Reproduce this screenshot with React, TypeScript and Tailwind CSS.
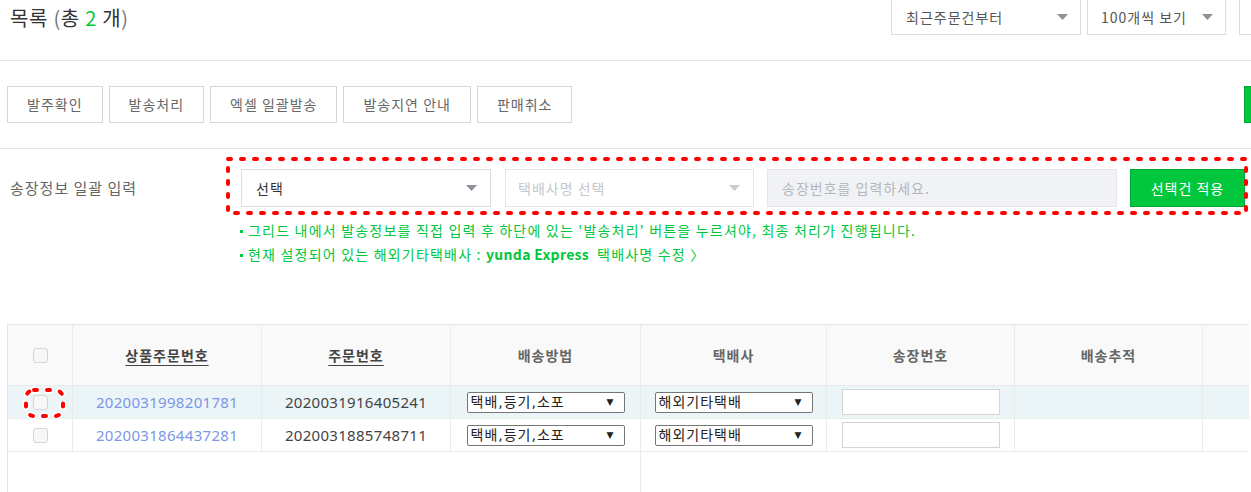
import React from 'react'

const ACTION_BUTTONS = ['발주확인', '발송처리', '엑셀 일괄발송', '발송지연 안내', '판매취소']

const ROWS = [
  { productNo: '2020031998201781', orderNo: '2020031916405241', selected: true },
  { productNo: '2020031864437281', orderNo: '2020031885748711', selected: false },
]

const COLS = 'grid grid-cols-[65px_189px_189px_190px_186px_188px_188px_1fr]'

function Caret({ color = '#8e9298' }: { color?: string }) {
  return (
    <svg width="11" height="6" viewBox="0 0 11 6" className="shrink-0">
      <polygon points="0,0 11,0 5.5,6" fill={color} />
    </svg>
  )
}

function Checkbox() {
  return <span className="block w-[15px] h-[15px] rounded-[3px] border border-[#d6d6d6] bg-[#f7f7f7]" />
}

function NativeSelect({ value }: { value: string }) {
  return (
    <div className="flex items-center justify-between w-[158px] h-[21px] border border-[#767676] rounded-[2px] bg-white pl-[3px] pr-[10px] text-[14px] leading-none text-[#222] font-['DejaVu_Sans','Noto_Sans_CJK_KR',sans-serif]">
      <span className="tracking-[1px]">{value}</span>
      <span className="text-[9px]">▼</span>
    </div>
  )
}

function DottedBox({ rx = 0, halo = false }: { rx?: number; halo?: boolean }) {
  return (
    <svg className="absolute inset-0 w-full h-full overflow-visible pointer-events-none">
      {halo && (
        <rect x="2" y="2" width="calc(100% - 4px)" height="calc(100% - 4px)" rx={rx} fill="none" stroke="#fff" strokeWidth="7" strokeDasharray="3 10" strokeLinecap="round" />
      )}
      <rect x="2" y="2" width="calc(100% - 4px)" height="calc(100% - 4px)" rx={rx} fill="none" stroke="#f00" strokeWidth="4" strokeDasharray="3 10" strokeLinecap="round" />
    </svg>
  )
}

function Bullet() {
  return <span className="inline-block w-[3px] h-[3px] bg-[#00c73c] align-middle mr-[5px] mb-[2px]" />
}

export default function App() {
  return (
    <div className="w-[1251px] h-[492px] overflow-hidden bg-white text-[#333] font-['Noto_Sans_CJK_KR',sans-serif]">
      {/* 상단 타이틀 + 정렬 */}
      <div className="h-[61px] border-b border-[#e5e5e5] flex items-start justify-between">
        <h2 className="pl-[10px] pt-[3px] text-[20px] leading-[30px] tracking-[0.7px] font-normal text-[#333]">
          목록 <span className="text-[#777]">(</span>총 <span className="text-[#00c73c]">2</span> 개<span className="text-[#777]">)</span>
        </h2>
        <div className="flex items-start -mr-[48px] text-[14px] tracking-[1px] text-[#555]">
          <div className="flex items-center justify-between w-[190px] h-[35px] border border-t-0 border-[#dcdde1] pl-[14px] pr-[12px]">
            <span>최근주문건부터</span>
            <Caret />
          </div>
          <div className="ml-[6px] flex items-center justify-between w-[139px] h-[35px] border border-t-0 border-[#dcdde1] pl-[13px] pr-[12px]">
            <span>100개씩 보기</span>
            <Caret />
          </div>
          <div className="ml-[13px] w-[60px] h-[35px] border border-t-0 border-[#dcdde1]" />
        </div>
      </div>

      {/* 처리 버튼 */}
      <div className="flex items-center justify-between pl-[7px] pt-[25px] pb-[25px] border-b border-[#e5e5e5]">
        <div className="flex gap-[6px]">
          {ACTION_BUTTONS.map((label) => (
            <button
              key={label}
              className="h-[37px] px-[19px] border border-[#d4d6db] bg-white text-[14px] tracking-[1px] text-[#666]"
            >
              {label}
            </button>
          ))}
        </div>
        <div className="w-[7px] h-[37px] bg-[#00c73c] border border-[#00a835] border-r-0" />
      </div>

      {/* 송장정보 일괄 입력 */}
      <div className="relative pt-[20px]">
        <div className="flex items-start text-[14px] tracking-[1px]">
          <div className="w-[241px] pl-[10px] leading-[38px] text-[15px] text-[#666]">송장정보 일괄 입력</div>
          <div className="flex items-center">
            <div className="flex items-center justify-between w-[250px] h-[38px] border border-[#dcdde1] bg-white pl-[14px] pr-[13px] text-[#333]">
              <span>선택</span>
              <Caret />
            </div>
            <div className="ml-[14px] flex items-center justify-between w-[249px] h-[38px] border border-[#e6e7ea] bg-white pl-[12px] pr-[13px] text-[#c5c7cc]">
              <span>택배사명 선택</span>
              <Caret color="#c8cbd0" />
            </div>
            <div className="ml-[13px] flex items-center w-[350px] h-[38px] border border-[#e3e5ea] bg-[#f1f2f5] pl-[14px] text-[#b3b6bc]">
              송장번호를 입력하세요.
            </div>
            <button className="ml-[13px] w-[115px] h-[38px] bg-[#00c73c] border border-[#00a835] text-white">
              선택건 적용
            </button>
          </div>
        </div>
        <div className="ml-[240px] mt-[11px] h-[48px] text-[14px] leading-[24px] tracking-[1.2px] text-[#00c73c]">
          <p className="h-[24px]">
            <Bullet />그리드 내에서 발송정보를 직접 입력 후 하단에 있는 '발송처리' 버튼을 누르셔야, 최종 처리가 진행됩니다.
          </p>
          <p className="h-[24px]">
            <Bullet />현재 설정되어 있는 해외기타택배사 : <b className="font-bold tracking-[0.3px]">yunda Express</b>
            <span className="ml-[8px]">택배사명 수정 〉</span>
          </p>
        </div>
        <div className="absolute left-[226px] top-[8px] w-[1022px] h-[58px]">
          <DottedBox />
        </div>
      </div>

      {/* 그리드 */}
      <div className="ml-[7px] mt-[58px] w-[1242px] border-t border-l border-[#e5e5e5]">
        <div className={`${COLS} h-[61px] bg-[#f9f9f9] text-[14px] tracking-[1px]`}>
          <div className="flex items-center justify-center border-r border-b border-[#ebebeb]">
            <Checkbox />
          </div>
          <div className="flex items-center justify-center border-r border-b border-[#ebebeb] font-bold text-[#444] underline underline-offset-4">상품주문번호</div>
          <div className="flex items-center justify-center border-r border-b border-[#ebebeb] font-bold text-[#444] underline underline-offset-4">주문번호</div>
          <div className="flex items-center justify-center border-r border-b border-[#ebebeb] font-bold text-[#666]">배송방법</div>
          <div className="flex items-center justify-center border-r border-b border-[#ebebeb] font-bold text-[#666]">택배사</div>
          <div className="flex items-center justify-center border-r border-b border-[#ebebeb] font-bold text-[#666]">송장번호</div>
          <div className="flex items-center justify-center border-r border-b border-[#ebebeb] font-bold text-[#666]">배송추적</div>
          <div className="border-b border-[#ebebeb]" />
        </div>

        {ROWS.map((row) => (
          <div key={row.productNo} className={`${COLS} h-[33px] ${row.selected ? 'bg-[#ebf5f7]' : 'bg-white'}`}>
            <div className="relative flex items-center justify-center border-r border-b border-[#ebebeb]">
              <Checkbox />
              {row.selected && (
                <div className="absolute left-[16px] top-[2px] w-[41px] h-[30px]">
                  <DottedBox rx={8} halo />
                </div>
              )}
            </div>
            <div className="flex items-center justify-center border-r border-b border-[#ebebeb] font-['Noto_Sans',sans-serif] text-[15px] tracking-[0.3px] text-[#7b96e6]">
              {row.productNo}
            </div>
            <div className="flex items-center justify-center border-r border-b border-[#ebebeb] font-['Noto_Sans',sans-serif] text-[15px] tracking-[0.3px] text-[#444]">
              {row.orderNo}
            </div>
            <div className="flex items-center justify-center border-r border-b border-[#ebebeb]">
              <NativeSelect value="택배,등기,소포" />
            </div>
            <div className="flex items-center justify-center border-r border-b border-[#ebebeb]">
              <NativeSelect value="해외기타택배" />
            </div>
            <div className="flex items-center justify-center border-r border-b border-[#ebebeb]">
              <div className="w-[158px] h-[26px] border border-[#d5d5d5] bg-white" />
            </div>
            <div className="border-r border-b border-[#ebebeb]" />
            <div className="border-b border-[#ebebeb]" />
          </div>
        ))}

        <div className="grid grid-cols-[633px_1fr] h-[60px]">
          <div className="border-r border-[#ebebeb]" />
          <div />
        </div>
      </div>
    </div>
  )
}
